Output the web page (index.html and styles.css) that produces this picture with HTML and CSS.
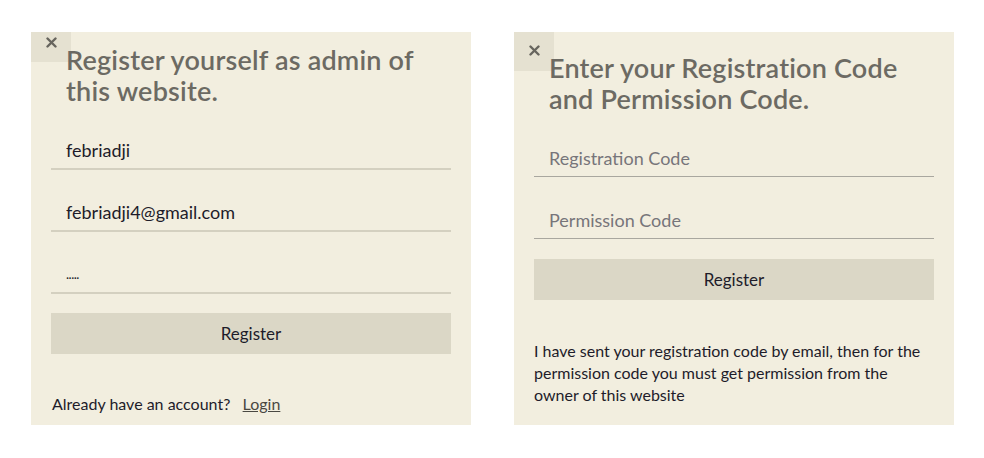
FILE: index.html
```html
<!DOCTYPE html>
<html lang="en">
<head>
<meta charset="utf-8">
<title>Register</title>
<link rel="stylesheet" href="styles.css">
</head>
<body>
<div class="page">
  <section class="card card-admin">
    <button class="close close-short" aria-label="Close">
      <svg width="11" height="11" viewBox="0 0 11 11"><path d="M1.5 1.5 9.5 9.5M9.5 1.5 1.5 9.5" stroke="#67655e" stroke-width="2.4" stroke-linecap="round"/></svg>
    </button>
    <h1 class="title title-admin">Register yourself as admin of this website.</h1>
    <form class="form">
      <input class="field" type="text" value="febriadji">
      <input class="field" type="text" value="febriadji4@gmail.com">
      <input class="field field-pass" type="text" value=".....">
      <button type="button" class="submit">Register</button>
    </form>
    <p class="foot">Already have an account?&nbsp;&nbsp; <a href="#" class="link">Login</a></p>
  </section>

  <section class="card card-code">
    <button class="close close-tall" aria-label="Close">
      <svg width="11" height="11" viewBox="0 0 11 11"><path d="M1.5 1.5 9.5 9.5M9.5 1.5 1.5 9.5" stroke="#67655e" stroke-width="2.4" stroke-linecap="round"/></svg>
    </button>
    <h1 class="title title-code">Enter your Registration Code and Permission Code.</h1>
    <form class="form form-code">
      <input class="field field-light" type="text" placeholder="Registration Code">
      <input class="field field-light" type="text" placeholder="Permission Code">
      <button type="button" class="submit">Register</button>
    </form>
    <p class="note">I have sent your registration code by email, then for the permission code you must get permission from the owner of this website</p>
  </section>
</div>
</body>
</html>
```

FILE: styles.css
```css
html, body {
  margin: 0;
  padding: 0;
  background: #ffffff;
}
body {
  font-family: "Lato", "Noto Sans", sans-serif;
  color: #1e1c2a;
}
.page {
  display: flex;
  gap: 43px;
  padding: 32px 0 0 31px;
}
.card {
  position: relative;
  box-sizing: border-box;
  width: 440px;
  height: 393px;
  background: #f2eedf;
  padding: 0 20px;
}
.close {
  position: absolute;
  top: 0;
  left: 0;
  width: 40px;
  border: 0;
  margin: 0;
  padding: 0;
  background: #e5e1d1;
  display: flex;
  justify-content: center;
  align-items: flex-start;
  cursor: pointer;
}
.close-short { height: 30px; padding-top: 5px; }
.close-tall { height: 39px; padding-top: 13px; }
.title {
  position: relative;
  margin: 0;
  font-family: "Lato", sans-serif;
  font-weight: 600;
  font-size: 27px;
  line-height: 31px;
  color: #6c6a63;
  letter-spacing: 0.2px;
}
.title-admin { padding: 12px 15px 0 15px; }
.title-code { padding: 20px 15px 0 15px; }
.form {
  display: flex;
  flex-direction: column;
}
.field {
  font-family: "Lato", sans-serif;
  font-size: 18px;
  line-height: 22px;
  color: #1e1c2a;
  background: transparent;
  border: 0;
  border-bottom: 2px solid #d4d0c0;
  padding: 8px 15px 7px 15px;
  margin: 23px 0 0 0;
  outline: none;
}
.form .field:first-child { margin-top: 25px; }
.form-code .field:first-child { margin-top: 25px; }
.field-pass { font-size: 13px; letter-spacing: -0.5px; }
.field-light {
  border-bottom: 1px solid #a9a79f;
  margin-top: 24px;
}
.field-light::placeholder { color: #77757a; }
.submit {
  margin-top: 19px;
  height: 41px;
  border: 0;
  background: #dbd7c6;
  font-family: "Lato", sans-serif;
  font-size: 17px;
  color: #1e1c2a;
  cursor: pointer;
}
.form-code .submit { margin-top: 20px; }
.foot {
  margin: 39px 0 0 1px;
  font-size: 16px;
  line-height: 22px;
  color: #1e1c2a;
}
.link {
  color: #4a4842;
  text-decoration: underline;
}
.note {
  margin: 40px 0 0 0;
  font-size: 16px;
  line-height: 22px;
  color: #1e1c2a;
}
```
